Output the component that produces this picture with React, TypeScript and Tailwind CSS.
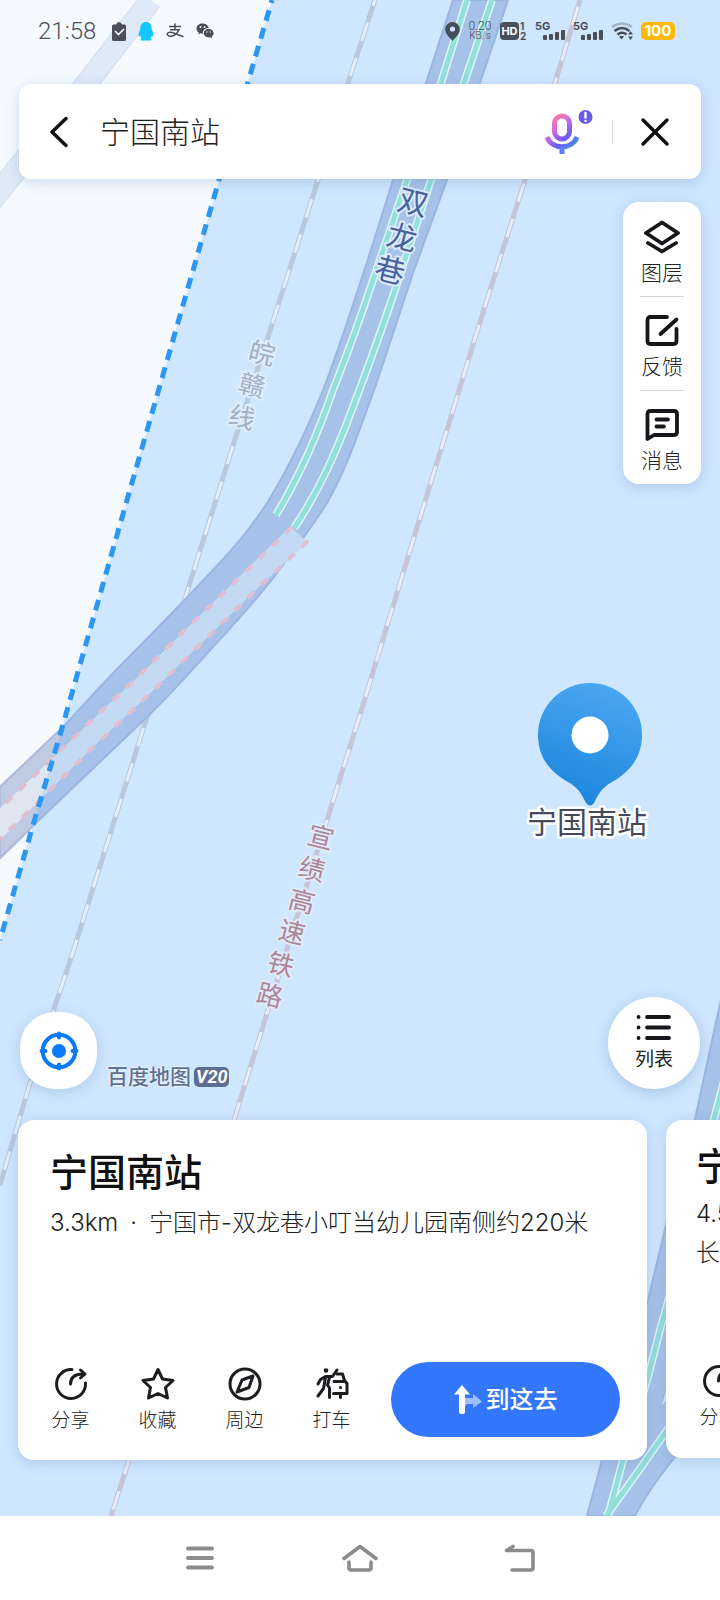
import type { ReactNode } from 'react';

const ROAD =
  'M453 0 L426 83 L393 180 C369 256 352 312 328 377 C313 417 290 466 267 503 C251 528 233 549 213 570 C182 603 153 633 123 663 C102 684 80 709 60 730 L0 787 V858 L37 822 L147 717 C171 694 192 670 213 647 C236 622 260 596 277 573 C295 549 312 527 327 503 C348 466 360 428 373 393 C387 353 400 312 413 273 L447 180 L480 83 L508 0 Z';
const TUNNEL = 'M290 527 L183 632 L143 672 L90 722 L37 773 L0 808 V840 L25 815 L90 750 L145 698 L212 633 L263 583 L308 542 Z';
const LANES = [
  'M467 0 L441 83 L407 180 L373 280 C359 322 347 355 333 390 C320 428 302 472 276 515',
  'M492 0 L464 83 L431 180 L395 290 C381 332 367 370 353 407 C337 450 320 490 294 528',
  'M740 1020 L714 1119 L684 1245 L660 1330 L648 1377 L623 1460 L608 1516',
  'M690 1400 L665 1433 L637 1473 L606 1516',
];
const GREY_RAIL = 'M375 0 L348 83 L318 180 L268 337 L237 433 L216 500 L182 608 L147 717 L72 955 L53 1012 L30 1083 L0 1185';
const PINK_RAIL = 'M580 0 L555 83 L525 180 L480 322 L404 570 L360 715 L327 820 L268 1010 L234 1120 L129 1460 L111 1516';
const BORDER = 'M272 0 L248 82 L219 180 L127 500 L60 735 L33 825 L0 940';

type Glyph = { ch: string; x: number; y: number };

const ROAD_NAME: Glyph[] = [
  { ch: '双', x: 413, y: 202 },
  { ch: '龙', x: 402, y: 237 },
  { ch: '巷', x: 390, y: 270 },
];
const GREY_NAME: Glyph[] = [
  { ch: '皖', x: 262, y: 353 },
  { ch: '赣', x: 252, y: 385 },
  { ch: '线', x: 242, y: 417 },
];
const PINK_NAME: Glyph[] = [
  { ch: '宣', x: 321, y: 837 },
  { ch: '绩', x: 312, y: 869 },
  { ch: '高', x: 302, y: 901 },
  { ch: '速', x: 292, y: 932 },
  { ch: '铁', x: 281, y: 964 },
  { ch: '路', x: 270, y: 995 },
];

function MapLabel({ glyphs, size, fill, halo }: { glyphs: Glyph[]; size: number; fill: string; halo: string }) {
  return (
    <g fontSize={size} fill={fill} stroke={halo} strokeWidth={4} strokeLinejoin="round" paintOrder="stroke" textAnchor="middle">
      {glyphs.map((g) => (
        <text key={g.ch} x={g.x} y={g.y} dy="0.37em" transform={`rotate(14 ${g.x} ${g.y})`}>
          {g.ch}
        </text>
      ))}
    </g>
  );
}

function MapCanvas() {
  return (
    <svg className="absolute inset-0 h-full w-full" viewBox="0 0 720 1516" preserveAspectRatio="xMidYMin slice" aria-hidden="true">
      <defs>
        <clipPath id="outside">
          <path d={`${BORDER} V0 Z`} />
        </clipPath>
        <linearGradient id="pin" x1="0.7" y1="0" x2="0.4" y2="1">
          <stop offset="0" stopColor="#4ba7f3" />
          <stop offset="1" stopColor="#1c86dc" />
        </linearGradient>
      </defs>
      <rect width="720" height="1516" fill="#cfe6ff" />
      <path d={`${BORDER} V0 Z`} fill="#f6faff" />
      <path d="M151 0 L87 83 L22 163 L-12 205" fill="none" stroke="#d6e2f4" strokeWidth="23" />
      <path d="M151 0 L87 83 L22 163 L-12 205" fill="none" stroke="#dfeaf9" strokeWidth="20" />

      <g fill="none">
        <path d={GREY_RAIL} stroke="#b8c9de" strokeWidth="5" />
        <path d={GREY_RAIL} stroke="#e2eefb" strokeWidth="3" strokeDasharray="19 18" strokeDashoffset="13" />
        <path d={PINK_RAIL} stroke="#c6c4d7" strokeWidth="5" />
        <path d={PINK_RAIL} stroke="#e6eefa" strokeWidth="3" strokeDasharray="19 18" strokeDashoffset="30" />
      </g>

      <path d={ROAD} fill="#a7c2e8" stroke="#9ab6e0" strokeWidth="2" />
      <path d={TUNNEL} fill="#c4daf2" />
      <g clipPath="url(#outside)">
        <path d={ROAD} fill="#bfcae3" stroke="#b0bbd9" strokeWidth="2" />
        <path d={TUNNEL} fill="#e0e6f1" />
      </g>
      <g fill="none" stroke="#e0bfd3" strokeWidth="4" strokeDasharray="9 9.5">
        <path d="M292 527 L183 632 L143 672 L90 722 L37 773 L0 809" />
        <path d="M308 541 L263 583 L212 633 L145 698 L90 750 L25 815 L0 839" />
      </g>

      <path
        d="M722 995 L695 1119 L666 1225 L648 1300 L602 1460 L587 1516 H635 Q648 1490 675 1457 L740 1380 V995 Z"
        fill="#a7c2e8"
        stroke="#9ab6e0"
        strokeWidth="2"
      />
      <path d="M667 1385 L660 1409 L667 1400 Z" fill="#cfe6ff" stroke="#9ab6e0" />
      <g fill="none">
        {LANES.map((d) => (
          <path key={d} d={d} stroke="#dff5fb" strokeWidth="8" />
        ))}
        {LANES.map((d) => (
          <path key={d} d={d} stroke="#93dfda" strokeWidth="5" />
        ))}
      </g>

      <path d={BORDER} fill="none" stroke="#2b97f3" strokeWidth="5" strokeDasharray="11 7.6" strokeDashoffset="8" />

      <MapLabel glyphs={ROAD_NAME} size={30} fill="#46639b" halo="#dcebfd" />
      <MapLabel glyphs={GREY_NAME} size={26} fill="#a3afc0" halo="#dfeeff" />
      <MapLabel glyphs={PINK_NAME} size={26} fill="#ad8598" halo="#e0ebfa" />

      <path
        d="M590 683 a52 52 0 0 1 52 52 C642 757 630 772 612 782 C601 788 598 795 594 803 Q590 808 586 803 C582 795 579 788 568 782 C550 772 538 757 538 735 A52 52 0 0 1 590 683 Z"
        fill="url(#pin)"
      />
      <circle cx="590" cy="735" r="18.5" fill="#fff" />
      <text
        x="587"
        y="833"
        fontSize="30"
        textAnchor="middle"
        fill="#454a5a"
        stroke="#fff"
        strokeWidth="5"
        strokeLinejoin="round"
        paintOrder="stroke"
      >
        宁国南站
      </text>
    </svg>
  );
}

function Signal() {
  return (
    <svg width="30" height="26" viewBox="0 0 30 26" fill="#4a4f57" aria-hidden="true">
      <text x="0" y="12" fontSize="11" fontWeight="700" fontFamily="Inter">
        5G
      </text>
      <rect x="8" y="17" width="4" height="5" rx="1" />
      <rect x="14" y="16" width="4" height="6" rx="1" />
      <rect x="20" y="14" width="4" height="8" rx="1" />
      <rect x="26" y="12" width="4" height="10" rx="1" />
    </svg>
  );
}

function StatusBar() {
  return (
    <div className="flex h-[62px] items-center pr-[45px] pl-[38px] text-[#4a4f57]">
      <span className="font-[Roboto,sans-serif] text-2xl font-light">21:58</span>
      <div className="ml-4 flex items-center gap-3">
        <svg width="14" height="19" viewBox="0 0 14 19" aria-hidden="true">
          <path d="M1.5 2.5 H4 Q5 0 7 0 Q9 0 10 2.5 H12.5 Q14 2.5 14 4 V17.5 Q14 19 12.5 19 H1.5 Q0 19 0 17.5 V4 Q0 2.5 1.5 2.5 Z" fill="#4a4f5c" />
          <path d="M3 9 L6.5 12.5 L12 7" fill="none" stroke="#fff" strokeWidth="1.6" />
        </svg>
        <svg width="16" height="19" viewBox="0 0 16 19" fill="#12c8fb" aria-hidden="true">
          <path d="M8 0 C11.5 0 13.5 2.5 13.5 5.5 C13.5 8 15.5 10.5 15.5 13.5 C15.5 15 14.5 14.5 13.5 13.5 C13.5 15 13 16 12.5 16.5 C14 17 14 18.5 12.5 18.5 H3.5 C2 18.5 2 17 3.5 16.5 C3 16 2.5 15 2.5 13.5 C1.5 14.5 0.5 15 0.5 13.5 C0.5 10.5 2.5 8 2.5 5.5 C2.5 2.5 4.5 0 8 0 Z" />
        </svg>
        <svg width="18" height="16" viewBox="0 0 18 16" fill="none" stroke="#4a4f57" strokeWidth="1.5" aria-hidden="true">
          <path d="M3 3.5 H15 M9 0.5 V6.5 M4 6.8 H13 C11 12 6 14 3 13 C0 12 1 9 4.5 9.2 C9 9.5 12 13 17.5 13.5" />
        </svg>
        <svg width="18" height="16" viewBox="0 0 18 16" aria-hidden="true">
          <path d="M6.5 0.5 C10 0.5 12.5 2.7 12.7 5 C9 5 6.5 7.5 7 10.6 C6 10.7 5.3 10.6 4.5 10.3 L2.3 11.6 L2.8 9.5 C-1.5 6.5 0.5 0.5 6.5 0.5 Z" fill="#4a4f57" />
          <path d="M12.5 6 C18 6 19 11.5 15.8 13.5 L16.2 15.2 L14.3 14.2 C11 15 7.8 13 7.8 10.2 C7.8 7.8 10 6 12.5 6 Z" fill="#4a4f57" />
          <g fill="#f6faff">
            <circle cx="4.5" cy="4" r="0.9" />
            <circle cx="8.5" cy="4" r="0.9" />
            <circle cx="11" cy="9" r="0.7" />
            <circle cx="14.2" cy="9" r="0.7" />
          </g>
        </svg>
      </div>
      <div className="ml-auto flex items-center gap-2">
        <svg width="15" height="19" viewBox="0 0 15 19" aria-hidden="true">
          <path d="M7.5 0 A7.3 7.3 0 0 1 14.8 7.3 C14.8 12 10 16 7.5 19 C5 16 0.2 12 0.2 7.3 A7.3 7.3 0 0 1 7.5 0 Z" fill="#464c5a" />
          <circle cx="7.5" cy="7" r="2.6" fill="#cfe6ff" />
        </svg>
        <div className="flex w-6 flex-col items-center font-[Roboto,sans-serif] font-light">
          <span className="text-[12px] leading-[10px]">0.20</span>
          <span className="text-[10px] leading-[10px]">KB/s</span>
        </div>
        <svg width="27" height="26" viewBox="0 0 27 26" fontFamily="Inter" fontWeight="700" aria-hidden="true">
          <rect x="0" y="4" width="19" height="18" rx="4" fill="#4a4f5c" />
          <text x="9.5" y="17" fontSize="11" textAnchor="middle" fill="#fff">
            HD
          </text>
          <text x="20" y="12" fontSize="10" fill="#4a4f57">
            1
          </text>
          <text x="20" y="22" fontSize="10" fill="#4a4f57">
            2
          </text>
        </svg>
        <Signal />
        <Signal />
        <svg width="22" height="18" viewBox="0 0 22 18" fill="none" strokeWidth="2.6" aria-hidden="true">
          <path d="M1 5 Q11 -2 21 5" stroke="#a5b1c1" />
          <path d="M3.5 9 Q11 3 18.5 9" stroke="#4a4f57" />
          <path d="M6.5 12.5 Q11 9 15.5 12.5" stroke="#4a4f57" />
          <path d="M8 14.5 Q10.5 13 13 14.5 L10.500 17.5 Z M17 12.500 L19.5 9 L22 12.5 Z M17 14.5 L19.5 18 L22 14.5 Z" fill="#4a4f57" />
        </svg>
        <div className="flex h-[18px] w-[34px] items-center justify-center rounded-[5px] bg-[#fcb90d] font-[Inter,sans-serif] text-[15px] font-bold text-white">
          100
        </div>
      </div>
    </div>
  );
}

function SearchBar() {
  return (
    <form className="mx-[19px] mt-[22px] flex h-[95px] items-center rounded-xl bg-white pr-[31px] pl-[31px] shadow-[0_3px_14px_rgba(90,130,180,0.28)]">
      <button type="button" aria-label="返回">
        <svg width="18" height="32" viewBox="0 0 18 32" fill="none" stroke="#111" strokeWidth="3.5" strokeLinecap="round" strokeLinejoin="round">
          <path d="M16 2.5 L2 16 L16 29.5" />
        </svg>
      </button>
      <input
        aria-label="搜索地点"
        className="ml-8 min-w-0 flex-1 bg-transparent text-[30px] leading-[44px] font-light text-[#222] outline-none"
        defaultValue="宁国南站"
      />
      <button type="button" aria-label="语音搜索">
        <svg width="54" height="50" viewBox="0 0 54 50" fill="none">
          <defs>
            <linearGradient id="mic" gradientUnits="userSpaceOnUse" x1="8" y1="8" x2="37" y2="42">
              <stop offset="0.1" stopColor="#ff7f98" />
              <stop offset="0.35" stopColor="#d46be0" />
              <stop offset="0.65" stopColor="#6f5cf3" />
              <stop offset="1" stopColor="#3aa0f5" />
            </linearGradient>
          </defs>
          <rect x="14.5" y="9" width="15" height="23" rx="7.5" stroke="url(#mic)" strokeWidth="5" />
          <path d="M7 30 C12 43 32 43 37 30" stroke="url(#mic)" strokeWidth="5" />
          <path d="M22 40 V47" stroke="#5a7cf6" strokeWidth="5" />
          <circle cx="45.500" cy="10" r="7" fill="#6a5be8" />
          <path d="M45.500 6 V10.500" stroke="#fff" strokeWidth="2.4" strokeLinecap="round" />
          <circle cx="45.500" cy="14" r="1.200" fill="#fff" />
        </svg>
      </button>
      <span className="mr-[27px] ml-[18px] h-6 w-px bg-[#d5d8dc]" />
      <button type="button" aria-label="关闭">
        <svg width="30" height="30" viewBox="0 0 30 30" stroke="#111" strokeWidth="3.5" strokeLinecap="round">
          <path d="M3 3 L27 27 M27 3 L3 27" />
        </svg>
      </button>
    </form>
  );
}

function ToolButton({ label, children }: { label: string; children: ReactNode }) {
  return (
    <button type="button" className="flex flex-col items-center gap-[7px] px-[18px] pt-[18px] pb-[11px] text-[21px] leading-6 font-light text-[#222]">
      <svg width="36" height="34" viewBox="0 0 36 34" fill="none" stroke="#15171b" strokeWidth="3.8" strokeLinecap="round" strokeLinejoin="round" aria-hidden="true">
        {children}
      </svg>
      {label}
    </button>
  );
}

function Toolbar() {
  return (
    <div className="mt-[23px] mr-[19px] flex flex-col self-end rounded-2xl bg-white shadow-[0_3px_14px_rgba(90,130,180,0.28)]">
      <ToolButton label="图层">
        <path d="M18 2.5 L34 13 L18 23.5 L2 13 Z M4 23 L18 31.5 L32 23" />
      </ToolButton>
      <span className="mx-[17px] -mb-px h-px bg-[#d3d5d8]" />
      <ToolButton label="反馈">
        <path d="M23 3 H6.5 Q3.5 3 3.5 6 V27 Q3.5 30 6.5 30 H29.5 Q32.5 30 32.5 27 V15 M32.5 5.5 L16.5 20" />
      </ToolButton>
      <span className="mx-[17px] -mb-px h-px bg-[#d3d5d8]" />
      <ToolButton label="消息">
        <path d="M6 3 H30 Q33 3 33 6 V24 Q33 27 30 27 H10 L3.5 31 V6 Q3.5 3 6 3 Z M12.5 11.5 H24 M12.5 18.5 H20" />
      </ToolButton>
    </div>
  );
}

function MapControls() {
  return (
    <div className="mb-[31px] flex items-end px-5">
      <button type="button" aria-label="定位" className="flex size-[77px] items-center justify-center rounded-[35px] bg-white shadow-[0_3px_14px_rgba(90,130,180,0.28)]">
        <svg width="40" height="40" viewBox="0 0 40 40" fill="none" stroke="#0a7af8" strokeWidth="4">
          <circle cx="20" cy="20" r="16.3" />
          <circle cx="20" cy="20" r="7" fill="#0a7af8" stroke="none" />
          <path d="M20 2.500 V6.500 M20 33.500 V37.500 M2.500 20 H6.500 M33.500 20 H37.500" strokeLinecap="round" />
        </svg>
      </button>
      <div className="ml-[10px] flex items-center gap-[3px] text-[#5d7192]">
        <span className="text-[21px] leading-6 font-medium [text-shadow:0_0_2px_#fff,0_0_2px_#fff]">百度地图</span>
        <span className="rounded-[5px] bg-[#5d6f90] px-[2px] font-[Roboto,sans-serif] text-[18px] leading-5 font-bold text-white italic">V20</span>
      </div>
      <button
        type="button"
        className="ml-auto flex size-[92px] flex-col items-center justify-center gap-[6px] rounded-full bg-white text-[19px] leading-6 text-[#222] shadow-[0_3px_14px_rgba(90,130,180,0.35)]"
      >
        <svg width="36" height="28" viewBox="0 0 36 28" fill="none" stroke="#15171b" strokeWidth="3.8" strokeLinecap="round" aria-hidden="true">
          <path d="M2.500 3 H2.600 M2.500 13.500 H2.600 M2.500 24 H2.600 M11 3 H33 M11 13.500 H33 M11 24 H33" />
        </svg>
        列表
      </button>
    </div>
  );
}

function Action({ label, children }: { label: string; children: ReactNode }) {
  return (
    <button type="button" className="flex w-[87px] shrink-0 flex-col items-center gap-2 text-[19px] leading-6 font-light text-[#222]">
      <svg width="34" height="34" viewBox="0 0 34 34" fill="none" stroke="#1c1d20" strokeWidth="3" strokeLinecap="round" strokeLinejoin="round" aria-hidden="true">
        {children}
      </svg>
      {label}
    </button>
  );
}

function ShareAction() {
  return (
    <Action label="分享">
      <path d="M18 2.5 A14.5 14.5 0 1 0 31.5 16 M16.5 17 C16.5 10.5 20 7 29 7 M26.5 3 L31 7 L26.5 11" />
    </Action>
  );
}

function PlaceCard() {
  return (
    <article className="flex h-[340px] w-[calc(100%-73px)] shrink-0 flex-col rounded-2xl bg-white pt-[24px] shadow-[0_3px_14px_rgba(90,130,180,0.28)]">
      <h1 className="pl-8 text-[38px] leading-[56px] font-medium text-[#111]">宁国南站</h1>
      <p className="mt-[5px] pl-8 text-2xl leading-9 font-light whitespace-nowrap text-[#222]">
        3.3km<span className="mx-3">·</span>宁国市-双龙巷小叮当幼儿园南侧约220米
      </p>
      <div className="mt-auto mb-[23px] flex items-center pr-[27px] pl-[9px]">
        <ShareAction />
        <Action label="收藏">
          <path d="M17 2.5 L21.5 12 L32 13.5 L24.5 20.5 L26.5 31 L17 26.5 L7.5 31 L9.5 20.5 L2 13.5 L12.5 12 Z" />
        </Action>
        <Action label="周边">
          <circle cx="17" cy="17" r="15" />
          <path d="M25 9 L21 20.5 L9 25 L14 13 Z" />
        </Action>
        <Action label="打车">
          <circle cx="11" cy="3.5" r="2.3" fill="#1c1d20" stroke="none" />
          <path d="M22 3 L17.5 9.5 L10.5 9.5 L5.5 12.500 L3 17 M10.500 10.500 L8.500 21.500 L3 29 M14.500 10.500 L12.500 18 L14.500 21 V30.500" />
          <path d="M22 7 H27.500 L29.500 13.500 L32 16.500 V26.500 H18.500 M19 14.500 H28.500 M25.500 20.500 H25.600 M25.500 27 V30.500" />
        </Action>
        <button type="button" className="ml-auto flex h-[75px] w-[229px] items-center justify-center rounded-full bg-[#3377ff] text-2xl font-medium text-white">
          <svg className="mr-1" width="28" height="30" viewBox="0 0 28 30" aria-hidden="true">
            <path d="M10 13 H19 V9 L28 16.5 L19 23 V19 H13 L10 22 Z" fill="#9cc0ff" />
            <path d="M8 0 L16 9.5 H11 V27 Q11 29 8 29 Q5 29 5 27 V9.5 H0 Z" fill="#fff" />
          </svg>
          到这去
        </button>
      </div>
    </article>
  );
}

function NextCard() {
  return (
    <article className="flex h-[338px] w-[calc(100%-73px)] shrink-0 flex-col rounded-2xl bg-white pt-[18px] shadow-[0_3px_14px_rgba(90,130,180,0.28)]">
      <h2 className="pl-[30px] text-[38px] leading-[56px] font-medium text-[#111]">宁</h2>
      <p className="pl-[30px] text-2xl leading-[39px] font-light text-[#222]">
        4.5
        <br />长
      </p>
      <div className="mt-auto mb-[28px] flex pl-[9px]">
        <ShareAction />
      </div>
    </article>
  );
}

function NavBar() {
  return (
    <nav className="flex h-[84px] shrink-0 justify-center bg-white">
      <button type="button" aria-label="最近任务" className="flex w-40 items-center justify-center">
        <svg width="28" height="24" viewBox="0 0 28 24" stroke="#8c8c8c" strokeWidth="3.8" strokeLinecap="round">
          <path d="M2 2.5 H26 M2 12 H26 M2 21.5 H26" />
        </svg>
      </button>
      <button type="button" aria-label="主屏幕" className="flex w-40 items-center justify-center">
        <svg width="36" height="28" viewBox="0 0 36 28" fill="none" stroke="#8c8c8c" strokeWidth="3.6" strokeLinecap="round" strokeLinejoin="round">
          <path d="M2 14.5 L18 2.5 L34 14.5 M7 18 V24 Q7 26 9 26 H27 Q29 26 29 24 V18" />
        </svg>
      </button>
      <button type="button" aria-label="返回上一页" className="flex w-40 items-center justify-center">
        <svg width="32" height="28" viewBox="0 0 32 28" fill="none" stroke="#8c8c8c" strokeWidth="3.6" strokeLinecap="round" strokeLinejoin="round">
          <path d="M9 2.5 L2.5 6.5 H27 Q29 6.5 29 8.5 V24 Q29 26 27 26 H8" />
        </svg>
      </button>
    </nav>
  );
}

export default function App() {
  return (
    <div className="flex min-h-screen flex-col font-[Inter,'Noto_Sans_CJK_SC',sans-serif]">
      <main className="relative flex flex-1 flex-col overflow-hidden">
        <MapCanvas />
        <div className="relative flex flex-1 flex-col">
          <StatusBar />
          <SearchBar />
          <Toolbar />
          <div className="mt-auto">
            <MapControls />
            <div className="mb-14 flex gap-[19px] pl-[18px]">
              <PlaceCard />
              <NextCard />
            </div>
          </div>
        </div>
      </main>
      <NavBar />
    </div>
  );
}
